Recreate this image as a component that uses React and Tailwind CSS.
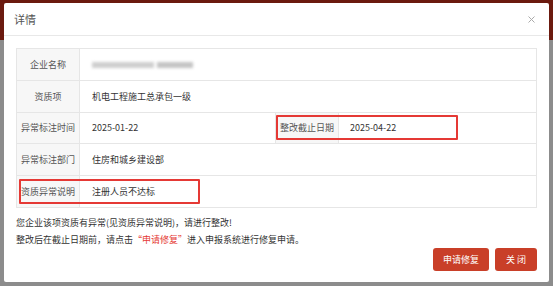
import React from 'react';

const font = { fontFamily: '"Noto Sans CJK SC", "Noto Sans", sans-serif' };

const Label = ({ children, className = '' }) => (
  <div className={`w-[63px] shrink-0 flex items-center justify-center bg-[#f7f7f7] border-r border-[#e6e6e6] text-[#555] ${className}`}>
    {children}
  </div>
);

const Value = ({ children, className = '' }) => (
  <div className={`flex-1 flex items-center pl-[12px] text-[#333] ${className}`}>{children}</div>
);

const App = () => {
  return (
    <div
      style={font}
      className="w-[553px] h-[286px] overflow-hidden bg-[linear-gradient(to_bottom,#6b1a0f_0,#6b1a0f_40px,#8c8c8c_40px)] pt-[3px] pl-[4px]"
    >
      <div className="w-[545px] h-[279px] bg-white rounded-[2px] flex flex-col">
        {/* header */}
        <div className="h-[33px] shrink-0 flex items-center justify-between pl-[10px] pr-[14px] border-b border-[#e8e8e8]">
          <span className="text-[11px] text-[#555]">详情</span>
          <svg width="7" height="7" viewBox="0 0 7 7" className="text-[#aaa]">
            <path d="M0.5 0.5L6.5 6.5M6.5 0.5L0.5 6.5" stroke="currentColor" strokeWidth="1" />
          </svg>
        </div>

        {/* body */}
        <div className="flex-1 flex flex-col px-[12px] pt-[12px] pb-[11px] text-[9px]">
          <div className="border border-[#e6e6e6] flex flex-col">
            <div className="h-[32px] flex border-b border-[#e6e6e6]">
              <Label>企业名称</Label>
              <Value>
                <div className="flex items-center gap-[3px] blur-[1.5px]">
                  <div className="w-[62px] h-[6px] bg-[#cfcfcf]" />
                  <div className="w-[36px] h-[6px] bg-[#c4c4c4]" />
                </div>
              </Value>
            </div>
            <div className="h-[32px] flex border-b border-[#e6e6e6]">
              <Label>资质项</Label>
              <Value>机电工程施工总承包一级</Value>
            </div>
            <div className="h-[31px] flex border-b border-[#e6e6e6]">
              <Label>异常标注时间</Label>
              <Value className="border-r border-[#e6e6e6]">2025-01-22</Value>
              <div className="relative w-[260px] shrink-0 flex">
                <Label>整改截止日期</Label>
                <div className="flex-1 flex items-center pl-[11px] text-[#333]">2025-04-22</div>
                <div className="absolute left-0 top-[2px] w-[182px] h-[25px] border-2 border-solid border-[#e53935] rounded-[1px]" />
              </div>
            </div>
            <div className="h-[32px] flex border-b border-[#e6e6e6]">
              <Label>异常标注部门</Label>
              <Value>住房和城乡建设部</Value>
            </div>
            <div className="relative h-[31px] flex">
              <Label>资质异常说明</Label>
              <Value>注册人员不达标</Value>
              <div className="absolute left-[2px] top-[3px] w-[181px] h-[25px] border-2 border-solid border-[#e53935] rounded-[1px]" />
            </div>
          </div>

          <div className="mt-[6px] leading-[17px] text-[#333]">
            <p>您企业该项资质有异常(见资质异常说明)，请进行整改!</p>
            <p>
              整改后在截止日期前，请点击<span className="text-[#e53935]">“申请修复”</span>进入申报系统进行修复申请。
            </p>
          </div>

          <div className="mt-auto flex justify-end gap-[6px]">
            <button className="w-[56px] h-[23px] rounded-[3px] bg-[#c93f28] text-white text-[9px]">申请修复</button>
            <button className="w-[42px] h-[23px] rounded-[3px] bg-[#c93f28] text-white text-[9px]">关 闭</button>
          </div>
        </div>
      </div>
    </div>
  );
};

export default App;
